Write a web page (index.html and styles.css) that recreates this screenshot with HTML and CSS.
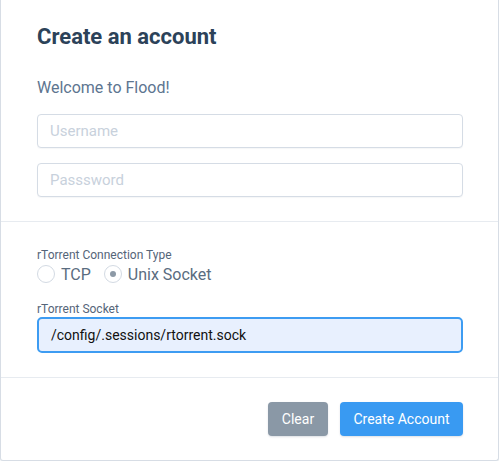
FILE: index.html
```html
<!DOCTYPE html>
<html>
<head>
<meta charset="utf-8">
<link rel="stylesheet" href="styles.css">
</head>
<body>
<div class="card">
  <section class="section top">
    <h1 class="title">Create an account</h1>
    <p class="welcome">Welcome to Flood!</p>
    <input class="field" type="text" placeholder="Username">
    <input class="field" type="text" placeholder="Passsword">
  </section>
  <section class="section middle">
    <div class="label">rTorrent Connection Type</div>
    <div class="radios">
      <label class="radio"><span class="circle"></span><span class="rtext">TCP</span></label>
      <label class="radio"><span class="circle checked"></span><span class="rtext">Unix Socket</span></label>
    </div>
    <div class="label label2">rTorrent Socket</div>
    <div class="socket">/config/.sessions/rtorrent.sock</div>
  </section>
  <section class="section actions">
    <button class="btn clear">Clear</button>
    <button class="btn primary">Create Account</button>
  </section>
</div>
</body>
</html>
```

FILE: styles.css
```css
* { box-sizing: border-box; }
html, body { margin: 0; padding: 0; background: #fff; }
body { font-family: Roboto, "Noto Sans", sans-serif; }

.card {
  width: 499px;
  height: 461px;
  border: 1px solid #d7dde5;
  border-top: none;
  border-radius: 0 0 3px 3px;
  box-shadow: 0 1px 2px rgba(40, 60, 90, 0.08);
  background: #fff;
  display: flex;
  flex-direction: column;
}

.section {
  padding: 0 35px 0 36px;
}

.top {
  padding-top: 23px;
  padding-bottom: 24px;
  border-bottom: 1px solid #e7ebf0;
  display: flex;
  flex-direction: column;
}

.title {
  margin: 0;
  font-size: 22px;
  line-height: 28px;
  font-weight: 700;
  color: #2c4259;
}

.welcome {
  margin: 0;
  margin-top: 27px;
  font-size: 16px;
  line-height: 20px;
  color: #5d7590;
}

.field {
  display: block;
  width: 100%;
  height: 34px;
  margin-top: 16px;
  border: 1px solid #d5dce5;
  border-radius: 4px;
  padding: 0 12px;
  font-family: Roboto, sans-serif;
  font-size: 15px;
  color: #333;
  box-shadow: 0 1px 1px rgba(30, 50, 80, 0.04);
  outline: none;
}
.field + .field { margin-top: 15px; }
.field::placeholder { color: #c8d1dc; }

.middle {
  padding-top: 26px;
  padding-bottom: 24px;
  border-bottom: 1px solid #e7ebf0;
}

.label {
  font-size: 12px;
  line-height: 14px;
  color: #556579;
}
.label2 { margin-top: 18px; }

.radios {
  display: flex;
  gap: 13px;
  margin-top: 2px;
}
.radio {
  display: flex;
  align-items: center;
  gap: 6px;
  height: 20px;
}
.circle {
  width: 18px;
  height: 18px;
  border-radius: 50%;
  border: 1px solid #d3dae3;
  background: #fff;
  display: flex;
  align-items: center;
  justify-content: center;
}
.circle.checked::after {
  content: "";
  width: 6px;
  height: 6px;
  border-radius: 50%;
  background: #8d99a6;
}
.rtext {
  font-size: 16px;
  color: #5a6c80;
}

.socket {
  margin-top: 1px;
  height: 36px;
  border: 2px solid #3d9cf2;
  border-radius: 5px;
  background: #e8f0fe;
  padding: 0 12px;
  display: flex;
  align-items: center;
  font-size: 14px;
  color: #111;
}

.actions {
  display: flex;
  justify-content: flex-end;
  gap: 12px;
  padding-top: 24px;
}

.btn {
  height: 34px;
  border: none;
  border-radius: 4px;
  font-family: Roboto, sans-serif;
  font-size: 14px;
  color: #fff;
  padding: 0;
  box-shadow: 0 1px 2px rgba(30, 50, 80, 0.15);
}
.clear { background: #8a98a6; width: 60px; }
.primary { background: #399af2; width: 123px; }
```
